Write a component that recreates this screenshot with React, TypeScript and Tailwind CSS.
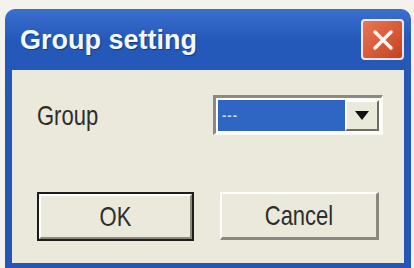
const App = () => {
  return (
    <div className="w-[414px] h-[268px] bg-[#f4f2ec] pt-[9px] pl-[5px] overflow-hidden">
      <div className="w-[406px] h-[259px] flex flex-col rounded-t-[10px] bg-[#2358b8] bg-gradient-to-b from-[#3a70d0] via-[#2458b9] via-[12%] to-[#2356b6]">
        {/* title bar */}
        <div className="h-[61px] flex items-center justify-between pl-[15px] pr-[7px]">
          <span className="text-[#f4f8ff] font-bold text-[27px] leading-none mt-[2px] [font-family:'Liberation_Sans',Arial,sans-serif] [text-shadow:1px_1px_1px_#123a80]">
            Group setting
          </span>
          <button className="w-[43px] h-[41px] rounded-[4px] border-2 border-[#f4e8e4] bg-[#d4532f] bg-gradient-to-br from-[#e77654] to-[#c8401f] flex items-center justify-center">
            <svg width="26" height="26" viewBox="0 0 26 26">
              <path d="M5 5L21 21M21 5L5 21" stroke="#fff7f2" strokeWidth="3.5" strokeLinecap="round" />
            </svg>
          </button>
        </div>
        {/* body */}
        <div className="flex-1 mx-[7px] mb-[5px] bg-[#ebe9dc] flex flex-col pl-[25px] pt-[25px] [font-family:'Liberation_Sans',Arial,sans-serif]">
          <div className="flex items-center h-[40px]">
            <span className="w-[176px] text-[22px] text-[#2e2e2a] inline-block scale-y-125 origin-left">Group</span>
            <div className="w-[170px] h-[40px] border-t-[3px] border-l-[3px] border-b-[2px] border-r-[2px] border-t-[#8c8a80] border-l-[#8c8a80] border-b-[#fbfaf4] border-r-[#fbfaf4] flex p-[2px] bg-white">
              <div className="flex-1 bg-[#2f66c4] flex items-center pl-[4px]">
                <span className="text-[#cfe0ff] text-[13px] font-bold tracking-[1px] leading-none">---</span>
              </div>
              <div className="w-[34px] bg-[#ebe9dc] border-t-2 border-l-2 border-t-white border-l-white border-b-2 border-r-2 border-b-[#6e6c64] border-r-[#6e6c64] flex items-center justify-center">
                <svg width="14" height="9" viewBox="0 0 14 9">
                  <path d="M0 0H14L7 9Z" fill="#111" />
                </svg>
              </div>
            </div>
          </div>
          <div className="flex gap-[26px] mt-[57px]">
            <button className="w-[157px] h-[49px] border-2 border-[#1c1c1a] bg-[#ebe9dc] flex">
              <div className="flex-1 border-t-2 border-l-2 border-t-white border-l-white border-b-2 border-r-2 border-b-[#8a887e] border-r-[#8a887e] flex items-center justify-center">
                <span className="text-[22px] text-[#2e2e2a] inline-block scale-y-125">OK</span>
              </div>
            </button>
            <button className="w-[159px] h-[48px] bg-[#ebe9dc] border-t-2 border-l-2 border-t-white border-l-white border-b-[3px] border-r-[3px] border-b-[#8a887e] border-r-[#8a887e] flex items-center justify-center">
              <span className="text-[22px] text-[#2e2e2a] inline-block scale-y-125">Cancel</span>
            </button>
          </div>
        </div>
      </div>
    </div>
  );
};

export default App;
